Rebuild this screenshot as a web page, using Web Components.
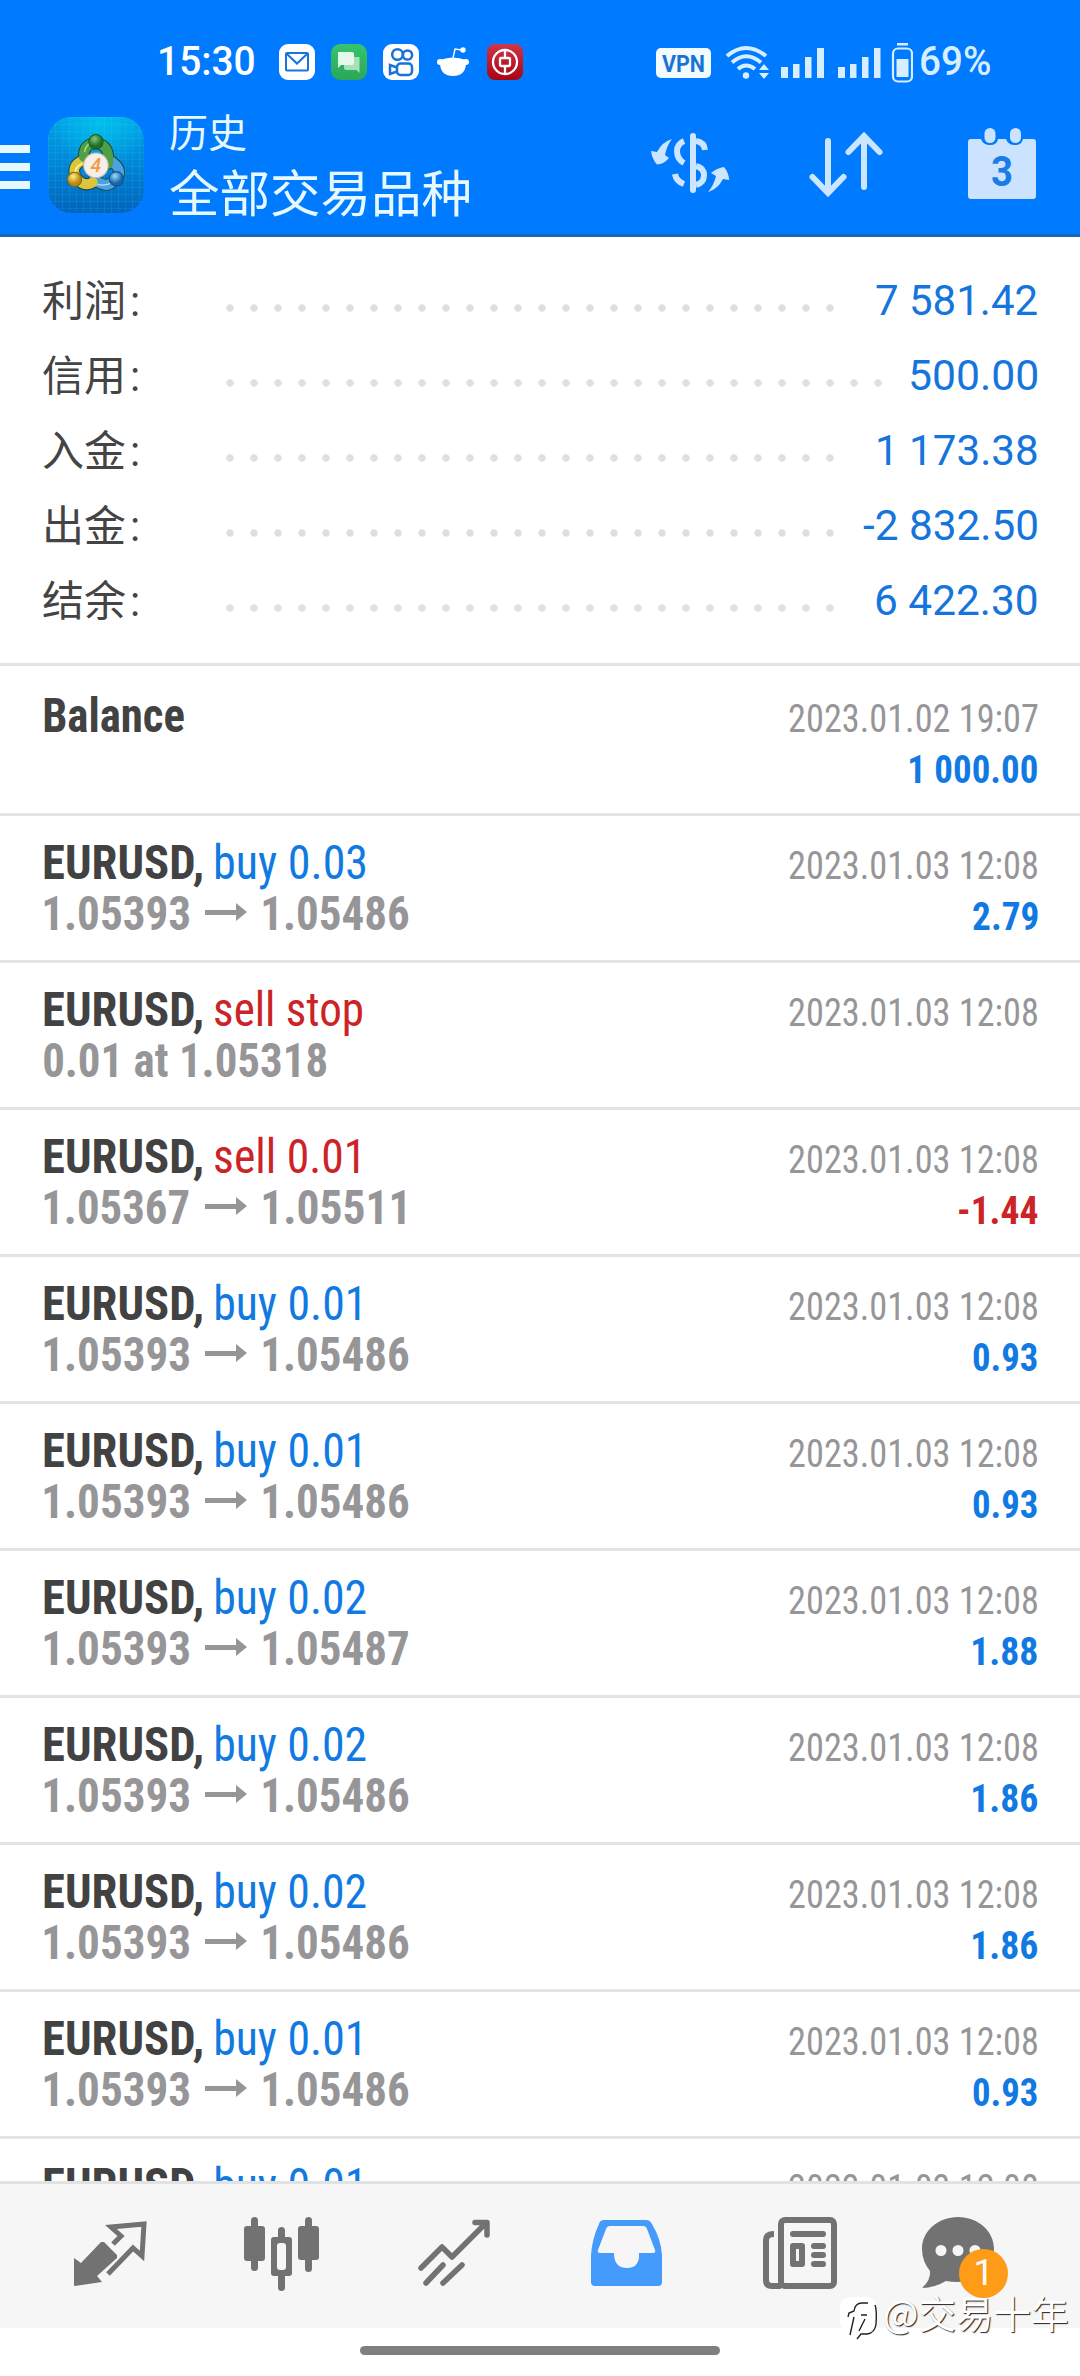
<!DOCTYPE html>
<html lang="zh"><head><meta charset="utf-8"><title>History</title>
<style>
body{margin:0;font-family:Roboto,"Noto Sans CJK SC",sans-serif;background:#fff}
</style></head><body>
<mt-app></mt-app>
<script>
const FONT='"Roboto Condensed",Roboto,"Noto Sans CJK SC",sans-serif';
const ctx=document.createElement('canvas').getContext('2d');
function define(name,cls){customElements.define(name,cls)}
function shadow(el,html){const r=el.attachShadow({mode:'open'});const t=document.createElement('template');t.innerHTML=html;r.append(t.content.cloneNode(true));return r}

/* Text whose drawn width is set by "w"; glyphs are condensed to suit. */
define('fit-text',class extends HTMLElement{
  connectedCallback(){
    const w=+this.getAttribute('w'),s=+this.getAttribute('size'),wt=this.getAttribute('weight')||400;
    const wide=this.hasAttribute('wide');
    const fam=wide?'Roboto,"Noto Sans CJK SC",sans-serif':FONT;
    ctx.fontStretch=wide?'normal':'condensed';
    ctx.font=`${wt} ${s}px ${fam}`;
    const m=ctx.measureText(this.textContent);
    const k=w/(m.actualBoundingBoxRight+m.actualBoundingBoxLeft);
    const dx=m.actualBoundingBoxLeft*k;
    shadow(this,`<style>:host{display:inline-block;width:${w}px;white-space:nowrap}
    span{display:inline-block;font:${wt} ${s}px/var(--lh,51px) ${fam};font-stretch:${wide?'100%':'75%'};transform-origin:0 0;transform:translateX(${dx}px) scaleX(${k})}</style><span><slot></slot></span>`);
  }
});

define('status-bar',class extends HTMLElement{connectedCallback(){shadow(this,`<style>
:host{display:flex;height:44px;padding:40px 90px 0 160px;justify-content:space-between;align-items:center;color:#fff;--lh:44px}
div{display:flex;align-items:center}svg{display:block}
</style>
<div><fit-text wide w="94" size="40" weight="500">15:30</fit-text>
<svg width="244" height="36" style="margin-left:25px" viewBox="0 0 244 36">
 <defs><linearGradient id="g" x2="0" y2="1"><stop stop-color="#37c46c"/><stop offset="1" stop-color="#2aa757"/></linearGradient><linearGradient id="r" x2="0" y2="1"><stop stop-color="#cf3648"/><stop offset="1" stop-color="#a80414"/></linearGradient></defs>
 <rect width="36" height="36" rx="9" fill="#fff"/><rect x="7" y="9" width="22" height="17.500" rx="1" fill="none" stroke="#1a73d6" stroke-width="2"/><path d="M8 10L18 19.500 28 10" fill="none" stroke="#1a73d6" stroke-width="2"/>
 <g transform="translate(52)"><rect width="36" height="36" rx="9" fill="url(#g)"/><path d="M15 13h13.500v16l-3-3H15q-2 0-2-2V15q0-2 2-2z" fill="#a5e0b8"/><path d="M7 8h14q2 0 2 2v9q0 2-2 2H10l-3 3z" fill="#e6f8ec"/></g>
 <g transform="translate(104)"><rect width="36" height="36" rx="9" fill="#fff"/><g fill="none" stroke="#1a73d6" stroke-width="2.500"><circle cx="14.500" cy="10.500" r="5.300"/><circle cx="24.500" cy="11" r="4.600"/><rect x="14" y="19.500" width="15" height="11.500" rx="3.500"/><path d="M14 23.500l-7-2.500v9l7-2.500"/></g></g>
 <g transform="translate(156)"><g fill="#fff"><path d="M5 16Q18 11 31 16q1 16-13 16T5 16z"/><circle cx="5" cy="18" r="3"/><circle cx="31" cy="18" r="3"/><circle cx="28" cy="6" r="2.700"/></g><path d="M18 14l2-9 7 1" fill="none" stroke="#fff" stroke-width="1.400"/></g>
 <g transform="translate(208)"><rect width="36" height="36" rx="8" fill="url(#r)"/><g fill="none" stroke="#fff" stroke-width="2.300"><circle cx="18" cy="18" r="12"/><rect x="13" y="14" width="10" height="8" rx="1"/><path d="M18 7v7M18 22v8"/></g></g>
</svg></div>
<div><svg width="257" height="42" viewBox="0 0 257 42">
 <g fill="#d6eeff"><rect y="7" width="55" height="30" rx="5" fill="#f2fbff"/>
 <g fill="none" stroke="#d6eeff" stroke-width="4" ><path d="M71 15Q90 -1 110 15M76 21.500Q90 9 105 21.500M82 28Q90 21 99 28"/></g><circle cx="90" cy="34.500" r="3.200"/><path d="M103 29l5-6 5 6zM103 32h10l-5 6z"/>
 <path d="M125 26h7v11h-7zM137 23h6.500v14h-6.500zM149 16h6.500v21h-6.500zM161 7h7v30h-7zM182 26h7v11h-7zM194 23h6.500v14h-6.500zM206 16h6.500v21h-6.500zM218 7h6.500v30H218z"/>
 <rect x="237" y="7.500" width="19" height="33" rx="5" fill="none" stroke="#d6eeff" stroke-width="2.200"/><rect x="241" y="2" width="11" height="2.500"/><rect x="240.500" y="18" width="12" height="18"/></g>
 <text x="6" y="30.500" font-family="Roboto" font-weight="700" font-size="24" textLength="43" lengthAdjust="spacingAndGlyphs" fill="#1a73d6">VPN</text>
</svg><fit-text wide w="69" size="40" weight="500" style="margin-left:8px;color:#d6eeff">69%</fit-text></div>`)}});

define('app-header',class extends HTMLElement{connectedCallback(){shadow(this,`<style>
:host{display:block;height:234px;background:#007aff;border-bottom:3px solid #1768bd;overflow:hidden}
nav{display:flex;align-items:center;height:162px}
.t{flex:1;color:#e6f9ff;margin-left:25px;height:112px;font-family:"Noto Sans CJK SC",sans-serif;font-weight:400}
.a{font-size:39px;line-height:42px}.b{font-size:50.500px;line-height:64px;margin-top:7px}svg{display:block;flex:none}
</style><status-bar></status-bar><nav>
<svg width="30" height="44" viewBox="0 0 30 44" style="margin-top:4px"><path d="M0 0h30v8H0zM0 18h30v8H0zM0 36h30v8H0z" fill="#e6f9ff"/></svg>
<svg width="96" height="96" viewBox="0 0 96 96" style="margin-left:18px"><defs>
<linearGradient id="bg" x2="0" y2="1"><stop stop-color="#00a4e6"/><stop offset=".5" stop-color="#0086d6"/><stop offset="1" stop-color="#0064bc"/></linearGradient>
<radialGradient id="gl" cx=".55" cy=".05" r=".5"><stop stop-color="#00ccf0" stop-opacity=".7"/><stop offset="1" stop-color="#00d2f0" stop-opacity="0"/></radialGradient>
<pattern id="p" width="7" height="7" patternUnits="userSpaceOnUse"><path d="M0 .5h7M.5 0v7" stroke="#5cc8ff" stroke-opacity=".13"/></pattern>
<radialGradient id="g1" cx=".4" cy=".3"><stop stop-color="#8cc47a"/><stop offset="1" stop-color="#1c7028"/></radialGradient><radialGradient id="g2" cx=".4" cy=".3"><stop stop-color="#ffee80"/><stop offset="1" stop-color="#b88b10"/></radialGradient><radialGradient id="g3" cx=".4" cy=".3"><stop stop-color="#9cdcff"/><stop offset="1" stop-color="#1765ac"/></radialGradient></defs>
<rect width="96" height="96" rx="23" fill="url(#bg)"/><rect width="96" height="96" rx="23" fill="url(#gl)"/><rect width="96" height="96" rx="23" fill="url(#p)"/>
<g transform="translate(-1 -1.500) scale(1.020 1.030)"><g fill="none" stroke-linecap="round"><g stroke="#1b4a44" stroke-width="11.500"><path d="M36 40Q36 27 48 27Q62 28 60 47"/><path d="M45 65Q36 70 29 61Q22 49 36 43"/><path d="M46 62Q58 72 67 63Q76 54 64 45"/></g>
<path d="M46 62Q58 72 67 63Q76 54 64 45" stroke="#4aa3e0" stroke-width="9.500"/><path d="M45 65Q36 70 29 61Q22 49 36 43" stroke="#dcc53c" stroke-width="9.500"/><path d="M36 40Q36 27 48 27Q62 28 60 47" stroke="#4fa045" stroke-width="9.500"/>
<path d="M50 67Q64 70 69 57" stroke="#a9d8f8" stroke-width="1.500"/><path d="M34 47Q27 50 28 57" stroke="#f8ee9c" stroke-width="2"/><path d="M37 35Q38 28 45 26" stroke="#a6d88e" stroke-width="1.500"/></g>
<circle cx="48" cy="25.500" r="7" fill="url(#g1)" stroke="#1c5a28"/><circle cx="27" cy="62" r="7" fill="url(#g2)" stroke="#7e6310"/><circle cx="68" cy="61.500" r="7" fill="url(#g3)" stroke="#154f86"/>
<circle cx="48" cy="48.500" r="12" fill="#f6efe8" stroke="#c9b9a8"/><text x="48" y="55" text-anchor="middle" font-family="Roboto" font-size="19" font-weight="500" font-style="italic" fill="#f39a4a">4</text></g></svg>
<div class="t"><div class="a">历史</div><div class="b">全部交易品种</div></div>
<svg width="385" height="76" viewBox="0 0 385 76" style="margin-right:44px;margin-top:-2px">
<g fill="none" stroke="#cce6ff" stroke-linecap="round" stroke-width="6">
<path d="M42 10V64"/><path d="M45 15Q53 16 54 24M33 15Q26 18 26 25Q26 33 33 37M45 40Q53 42 53 49Q53 57 45 59M24 48Q25 55 33 58" stroke-linecap="butt"/>
<path d="M177 15V65M161.500 51L177 67 192.500 51M213 61V11M197.500 26L213 10 228.500 26"/></g>
<g fill="#cce6ff"><path d="M21 13Q11 16 6 26L0 25Q1 33 6 38.500Q13 38 18 32L14 29Q16 19 21 13z"/><path d="M57 66Q67 63 72 53L78 54Q78 47 73 41Q66 42 60 47L65 50Q63 59 57 66z"/></g>
<path d="M320 13h10q2 6 9 6t8-6h8q2 6 9 6t8-6h10q3 0 3 3v54q0 3-3 3h-62q-3 0-3-3V16q0-3 3-3z" fill="#cce3ff"/><rect x="333.500" y="2" width="11" height="15" rx="5.500" fill="#cce3ff"/><rect x="359" y="2" width="11" height="15" rx="5.500" fill="#cce3ff"/><text x="351" y="60" text-anchor="middle" font-family="Roboto" font-size="43" font-weight="700" textLength="22" lengthAdjust="spacingAndGlyphs" fill="#1a7de6">3</text>
</svg></nav>`)}});

define('summary-row',class extends HTMLElement{connectedCallback(){const v=this.getAttribute('value');shadow(this,`<style>
:host{display:flex;height:75px;padding:0 43px 0 42px;align-items:center;--lh:75px}
.l{width:184px;color:#444;font:400 42px/75px "Noto Sans CJK SC",sans-serif;white-space:nowrap;margin-top:-2px}
.d{height:8px;width:${this.getAttribute('dots')*24}px;background:radial-gradient(circle at 4px 4px,#dfdfdf 3.300px,transparent 4.100px) 0 0/24px 8px;margin-top:14px}
fit-text{margin-left:auto;color:#1675dc}
i{font:400 42px/75px Roboto;margin-left:4px}
</style><div class="l"><slot></slot><i>:</i></div><div class="d"></div><fit-text wide size="42" w="${this.getAttribute('w')}">${v}</fit-text>`)}});

define('deal-row',class extends HTMLElement{connectedCallback(){const g=n=>this.getAttribute(n);shadow(this,`<style>
:host{display:block;box-sizing:border-box;height:147px;border-top:3px solid #e4e4e4;padding:21px 43px 0 43.500px;color:#424242}
:host([kind=balance]){height:150px;padding-top:24px}
.r{display:flex;align-items:baseline;height:51px}.s{flex:1;font:48px/51px Roboto}.s::before{content:"\\200b"}
.buy{color:#117ae2;margin-left:14.500px}.sell{color:#cb2328;margin-left:13.500px}.g{color:#969698}.v{color:#117ae2}.v.neg{color:#cb2328}
svg{margin:15px 16px 0 16px;align-self:flex-start}
</style><div class="r"><fit-text size="48" weight="700" w="${g('kind')?140:157.5}">${g('kind')?'Balance':'EURUSD,'}</fit-text>
${g('op')?`<fit-text class="${g('op').startsWith('b')?'buy':'sell'}" size="48" w="${g('ow')}">${g('op')}</fit-text>`:''}<span class="s"></span><fit-text class="g" size="39.500" w="248.500">${g('date')||'2023.01.03 12:08'}</fit-text></div>
<div class="r">${g('from')?`<fit-text class="g" style="margin-left:.5px" size="48" weight="700" w="145">${g('from')}</fit-text><svg width="42" height="20" viewBox="0 0 42 20"><path d="M0 7h31V0l11 9-11 9v-6H0z" fill="#969698"/></svg><fit-text class="g" size="48" weight="700" w="${g('to').endsWith('1')?141.5:145.5}">${g('to')}</fit-text>`:''}${g('note')?`<fit-text class="g" size="48" weight="700" w="282">${g('note')}</fit-text>`:''}<span class="s"></span>${g('val')?`<fit-text class="v ${g('val')[0]=='-'?'neg':''}" size="39.500" weight="700" w="${g('vw')||64.5}">${g('val')}</fit-text>`:''}</div>`)}});

define('tab-bar',class extends HTMLElement{connectedCallback(){shadow(this,`<style>
:host{display:block;height:144px;border-top:3px solid #e2e2e2;background:#f6f6f6}
nav{display:flex;padding:32px 0 0 70px}svg{display:block;overflow:visible}.c{position:relative}
b{position:absolute;left:37px;top:33px;width:49px;height:49px;border-radius:50%;background:#ff9c17;color:#fff;font:400 36px/49px Roboto;text-align:center}
</style><nav fill="none">
<svg width="80" height="80" style="margin-right:91px"><path d="M4 42l7 5 20-21 3 0 13 13v3L27 60l5 6-27 4q-1 0-1-1z" fill="#727272"/><path d="M43 28l8-8-10-9 33-3-2 32-9-8-25 26" fill="none" stroke="#727272" stroke-width="5"/></svg>
<svg width="80" height="80" style="margin-right:94px"><g fill="#727272"><rect x="3" y="10" width="21" height="35" rx="3"/><rect x="10" y="1" width="7" height="54" rx="3.500"/><rect x="30" y="21" width="21" height="39" rx="3"/><rect x="37" y="11" width="7" height="64" rx="3.500"/><rect x="57" y="10" width="21" height="34" rx="3"/><rect x="64" y="1" width="7" height="55" rx="3.500"/></g><rect x="36" y="27" width="9" height="27" rx="3" fill="#f6f6f6"/></svg>
<svg width="80" height="80" style="margin-right:95px"><g fill="none" stroke="#727272" stroke-width="5.500" stroke-linecap="round" stroke-linejoin="round"><path d="M6 52L27 31 37 41 70 8M60 6.500H72V19"/><path d="M11 67L28 49M28 67L47 49"/></g></svg>
<svg width="80" height="80" style="margin-right:92px"><path fill-rule="evenodd" d="M14 4h42q4 0 6 4 9 15 10 31v27q0 4-4 4H5q-4 0-4-4V39Q2 23 9 8q1-4 5-4zM20 10q-3 0-4 3L8 34q-1 3 2 3h14q0 15 13 15t12-15h14q3 0 2-3l-8-21q-1-3-4-3z" fill="#449bfc"/></svg>
<svg width="80" height="80" style="margin-right:80px"><g fill="none" stroke="#727272" stroke-width="6"><rect x="19" y="4" width="53" height="66" rx="4"/><path d="M12 18Q4 18 4 24V64Q4 70 10 70H19"/></g><g fill="#727272"><rect x="28" y="15" width="36" height="6" rx="3"/><rect x="28" y="27" width="15" height="24" rx="3"/><rect x="49" y="27" width="15" height="6" rx="3"/><rect x="49" y="36" width="15" height="6" rx="3"/><rect x="49" y="45" width="15" height="6" rx="3"/></g><path d="M34 33h3v12h-3z" fill="#f6f6f6"/></svg>
<div class="c"><svg width="80" height="80"><path d="M36 1C16 1 0 15 0 33q0 12 8 22 1 9-8 17 12 0 24-7 5 1 12 1 36-3 36-33C72 15 56 1 36 1z" fill="#727272"/><circle cx="19" cy="34.500" r="5.500" fill="#f6f6f6"/><circle cx="36" cy="34.500" r="5.500" fill="#f6f6f6"/><circle cx="53" cy="34.500" r="5.500" fill="#f6f6f6"/></svg><b>1</b></div>
</nav>`)}});

define('water-mark',class extends HTMLElement{connectedCallback(){shadow(this,`<style>
:host{position:absolute;left:839px;top:2280px;display:flex;align-items:center;color:#fff;font:400 37.500px/50px "Noto Sans CJK SC",sans-serif;text-shadow:1px 1px 1px #222;white-space:nowrap}svg{display:block;margin:10px 4px 0 0}
</style><svg width="40" height="54"><path d="M12 7h16q9 0 9 10v14q0 9-8 11h-7l-5 6V42h-5q-11 0-11-11V18Q1 7 12 7z" fill="#fff"/><path d="M29 13h-6q-7 0-8 8l-5 2-1 4m6 0-4 18M28 25h-6m4 4-6 12M36 15q2 5 1 19-1 9-9 10h-6l-4 5" fill="none" stroke="#222" stroke-width="1.400"/></svg><span>@交易十年</span>`)}});

define('mt-app',class extends HTMLElement{connectedCallback(){
const S=[['利润','7 581.42',26,161.5],['信用','500.00',28,126.5],['入金','1 173.38',26,159],['出金','-2 832.50',26,174.5],['结余','6 422.30',26,161]];
const D=[['buy 0.03','1.05393','1.05486','2.79',149.5],['','','','',0],['sell 0.01','1.05367','1.05511','-1.44',144],['buy 0.01','1.05393','1.05486','0.93',144],['buy 0.01','1.05393','1.05486','0.93',144],['buy 0.02','1.05393','1.05487','1.88',149.5],['buy 0.02','1.05393','1.05486','1.86',149.5],['buy 0.02','1.05393','1.05486','1.86',149.5],['buy 0.01','1.05393','1.05486','0.93',144],['buy 0.01','1.05393','1.05486','0.93',144]];
shadow(this,`<style>:host{display:flex;flex-direction:column;width:1080px;height:2376px;overflow:hidden;position:relative;background:#fff}
.s{padding:26px 0 25px}.list{height:1518px;overflow:hidden}.h{width:360px;height:9px;border-radius:5px;background:#7f7f7f;margin:18px auto 0}</style>
<app-header></app-header><section class="s">${S.map(r=>`<summary-row value="${r[1]}" dots="${r[2]}" w="${r[3]}">${r[0]}</summary-row>`).join('')}</section>
<section class="list"><deal-row kind="balance" date="2023.01.02 19:07" val="1 000.00" vw="127.500"></deal-row>${D.map(r=>r[0]?`<deal-row op="${r[0]}" ow="${r[4]}" from="${r[1]}" to="${r[2]}" val="${r[3]}" vw="${r[3][0]=='-'?78.5:64.5}"></deal-row>`:`<deal-row op="sell stop" ow="147.500" note="0.01 at 1.05318"></deal-row>`).join('')}</section>
<tab-bar></tab-bar><div class="h"></div><water-mark></water-mark>`)}});
</script></body></html>
